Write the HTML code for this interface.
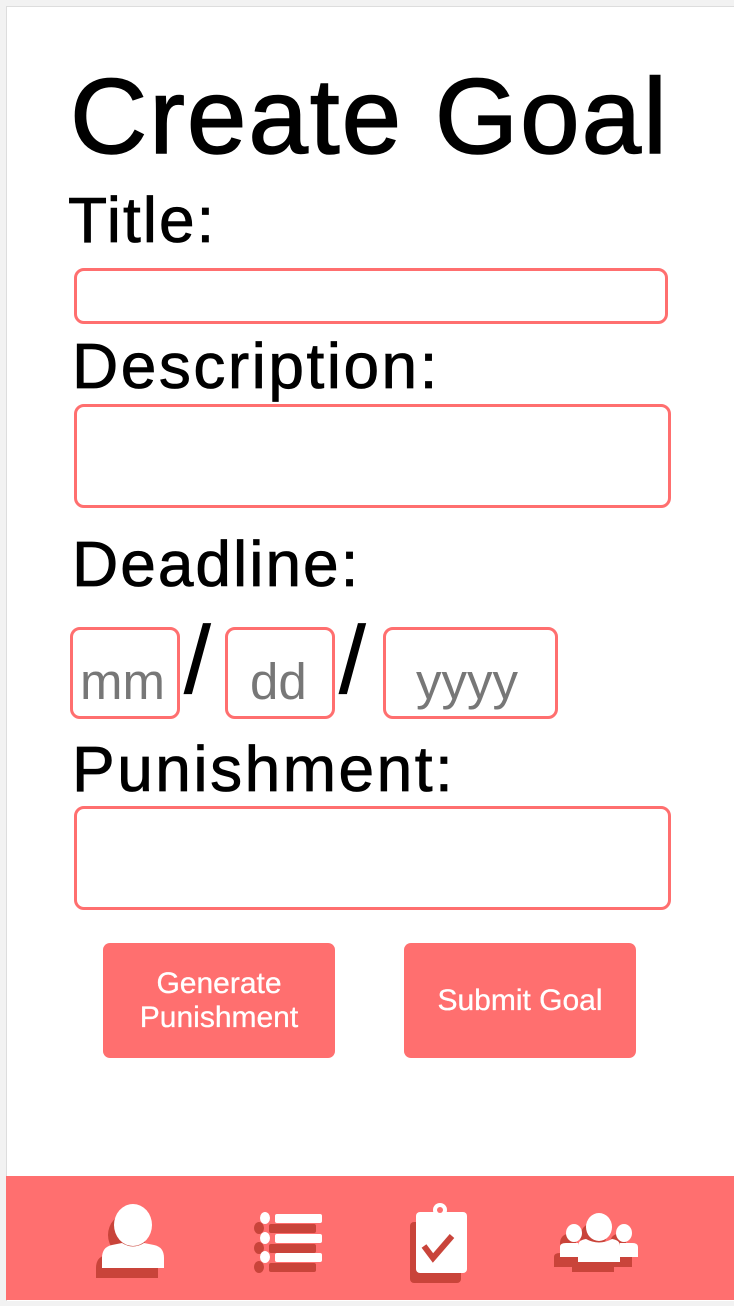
<!DOCTYPE html>
<html><head><meta charset="utf-8"><style>
html,body{margin:0;padding:0;width:734px;height:1306px;background:#f2f2f2;overflow:hidden;font-family:"Liberation Sans",sans-serif}
#p{position:absolute;left:6px;top:6px;width:728px;height:1294px;background:#fff;border-left:1px solid #ddd;border-top:1px solid #ddd}
.a{position:absolute;white-space:nowrap;color:#000;-webkit-text-stroke:0.8px #000}
.box{position:absolute;border:3px solid #ff6f6f;border-radius:10px;box-sizing:border-box;background:#fff}
.ph{position:absolute;color:#777;font-size:51px;white-space:nowrap}
.btn{position:absolute;background:#ff6f6f;border-radius:7px;color:#fff;font-size:30px;display:flex;align-items:center;justify-content:center;text-align:center;line-height:34px;-webkit-text-stroke:0.3px #fff}
#bar{position:absolute;left:6px;top:1176px;width:728px;height:124px;background:#ff6f6f}
svg{position:absolute}
</style></head><body>
<div id="p"></div>
<div class="a" style="left:70px;top:56px;font-size:107px;line-height:120px;letter-spacing:2px;-webkit-text-stroke:1.5px #000">Create Goal</div>
<div class="a" style="left:68px;top:184px;font-size:64px;line-height:72px;letter-spacing:2px">Title:</div>
<div class="box" style="left:74px;top:268px;width:594px;height:56px"></div>
<div class="a" style="left:72px;top:330px;font-size:64px;line-height:72px;letter-spacing:2.5px">Description:</div>
<div class="box" style="left:74px;top:404px;width:597px;height:104px"></div>
<div class="a" style="left:72px;top:528px;font-size:64px;line-height:72px;letter-spacing:2px">Deadline:</div>
<div class="box" style="left:70px;top:627px;width:110px;height:92px"></div>
<div class="ph" style="left:80px;top:652px">mm</div>
<div class="a" style="left:184px;top:606px;font-size:96px">/</div>
<div class="box" style="left:225px;top:627px;width:110px;height:92px"></div>
<div class="ph" style="left:250px;top:652px">dd</div>
<div class="a" style="left:339px;top:606px;font-size:96px">/</div>
<div class="box" style="left:383px;top:627px;width:175px;height:92px"></div>
<div class="ph" style="left:416px;top:652px">yyyy</div>
<div class="a" style="left:72px;top:733px;font-size:64px;line-height:72px;letter-spacing:2.5px">Punishment:</div>
<div class="box" style="left:74px;top:806px;width:597px;height:104px"></div>
<div class="btn" style="left:103px;top:943px;width:232px;height:115px">Generate<br>Punishment</div>
<div class="btn" style="left:404px;top:943px;width:232px;height:115px">Submit Goal</div>
<div id="bar"></div>
<svg width="734" height="130" style="left:0;top:1176px" viewBox="0 1176 734 130">
<defs>
<g id="u"><ellipse cx="133" cy="1225" rx="19" ry="21"/><path d="M102 1268 L102 1258 Q102 1247 112 1245 L122 1243 Q133 1250 144 1243 L154 1245 Q164 1247 164 1258 L164 1268 Z"/></g>
<g id="l"><ellipse cx="265" cy="1218" rx="5" ry="6"/><rect x="275" y="1214" width="47" height="9" rx="2"/><ellipse cx="265" cy="1238" rx="5" ry="6"/><rect x="275" y="1234" width="47" height="9" rx="2"/><ellipse cx="265" cy="1257" rx="5" ry="6"/><rect x="275" y="1253" width="47" height="9" rx="2"/></g>
<g id="c"><rect x="416" y="1212" width="51" height="61" rx="4"/><circle cx="440" cy="1210" r="7"/></g>
<g id="g"><ellipse cx="599" cy="1227" rx="13" ry="14"/><path d="M578 1262 L578 1246 Q578 1240 586 1239 Q599 1246 612 1239 Q620 1240 620 1246 L620 1262Z"/><ellipse cx="574" cy="1233" rx="8" ry="9"/><path d="M560 1257 L560 1247 Q560 1243 566 1243 L578 1243 L578 1257Z"/><ellipse cx="624" cy="1233" rx="8" ry="9"/><path d="M620 1243 L632 1243 Q638 1243 638 1247 L638 1257 L620 1257Z"/></g>
</defs>
<g fill="#c9443a" transform="translate(-6,10)"><use href="#u"/><use href="#l"/><use href="#c"/><use href="#g"/></g>
<g fill="#fff"><use href="#u"/><use href="#l"/><use href="#c"/><use href="#g"/></g>
<circle cx="440" cy="1210" r="3" fill="#ff6f6f"/>
<path d="M424 1246 L433 1258 L452 1236" stroke="#c9443a" stroke-width="6" fill="none"/>
</svg>
</body></html>
